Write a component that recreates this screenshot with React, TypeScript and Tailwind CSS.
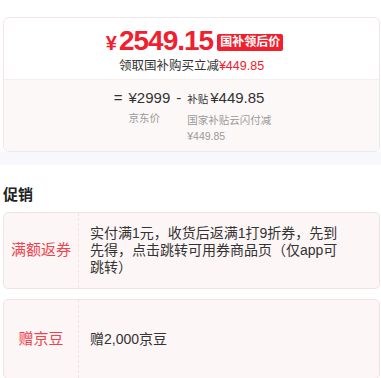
import React from 'react';

const font = { fontFamily: '"Liberation Sans", "Noto Sans CJK SC", sans-serif' };

const PromoRow: React.FC<{ label: string; children: React.ReactNode; height: string }> = ({ label, children, height }) => {
    return (
        <div className={`ml-[3px] mr-[1px] flex rounded-[5px] border border-[#f1e3e4] bg-[#fdf6f6] ${height}`}>
            <div className="w-[75px] shrink-0 flex items-center justify-center border-r border-dashed border-[#f0e4e4] text-[15px] text-[#f0434c]">
                {label}
            </div>
            <div className="flex items-center pl-[11px] pr-[40px] text-[14px] leading-[17px] text-[#333]">
                {children}
            </div>
        </div>
    );
};

const App: React.FC = () => {
    return (
        <div className="w-[381px] h-[378px] overflow-hidden bg-white" style={font}>
            <div className="pt-[17px]">
                <div className="ml-[3px] mr-[1px] rounded-[6px] border border-[#f1e6e7] overflow-hidden">
                    <div className="h-[61px] flex flex-col items-center pt-[9px]">
                        <div className="flex items-center text-[#f0202e] ml-[6px]">
                            <span className="text-[20px] font-bold leading-none mt-[4px]">¥</span>
                            <span className="text-[28px] font-bold leading-none tracking-[-1px] ml-[2px]">2549.15</span>
                            <span className="ml-[4px] mt-[2px] rounded-[2px] bg-[#f0202e] px-[3px] h-[17px] flex items-center text-[12px] font-bold text-white">国补领后价</span>
                        </div>
                        <div className="mt-[4px] text-[12.5px] leading-[15px] text-[#333]">
                            领取国补购买立减<span className="text-[#f0202e]">¥449.85</span>
                        </div>
                    </div>
                    <div className="h-[72px] border-t border-[#f6eded] bg-[#fdf8f8] flex justify-center pt-[9px]">
                        <div className="flex items-start gap-[6px] text-[#333] ml-[6px]">
                            <span className="text-[15px] leading-[18px]">=</span>
                            <div className="flex flex-col">
                                <span className="text-[15px] leading-[18px]">¥2999</span>
                                <span className="mt-[4px] text-[10.5px] leading-[15px] text-[#999]">京东价</span>
                            </div>
                            <span className="text-[15px] leading-[18px]">-</span>
                            <div className="flex flex-col">
                                <span className="text-[15px] leading-[18px]">
                                    <span className="text-[10.5px] mr-[2px]">补贴</span>¥449.85
                                </span>
                                <span className="mt-[4px] w-[88px] text-[10.5px] leading-[16px] text-[#999]">国家补贴云闪付减¥449.85</span>
                            </div>
                        </div>
                    </div>
                </div>
                <div className="h-[13px] bg-[#f7f8fb]" />
                <div className="pl-[3px] pt-[21px] h-[47px] text-[15px] font-bold text-[#222] leading-[18px]">促销</div>
                <PromoRow label="满额返券" height="h-[77px]">
                    实付满1元，收货后返满1打9折券，先到先得，点击跳转可用券商品页（仅app可跳转）
                </PromoRow>
                <div className="h-[10px]" />
                <PromoRow label="赠京豆" height="h-[80px]">
                    赠2,000京豆
                </PromoRow>
            </div>
        </div>
    );
};

export default App;
